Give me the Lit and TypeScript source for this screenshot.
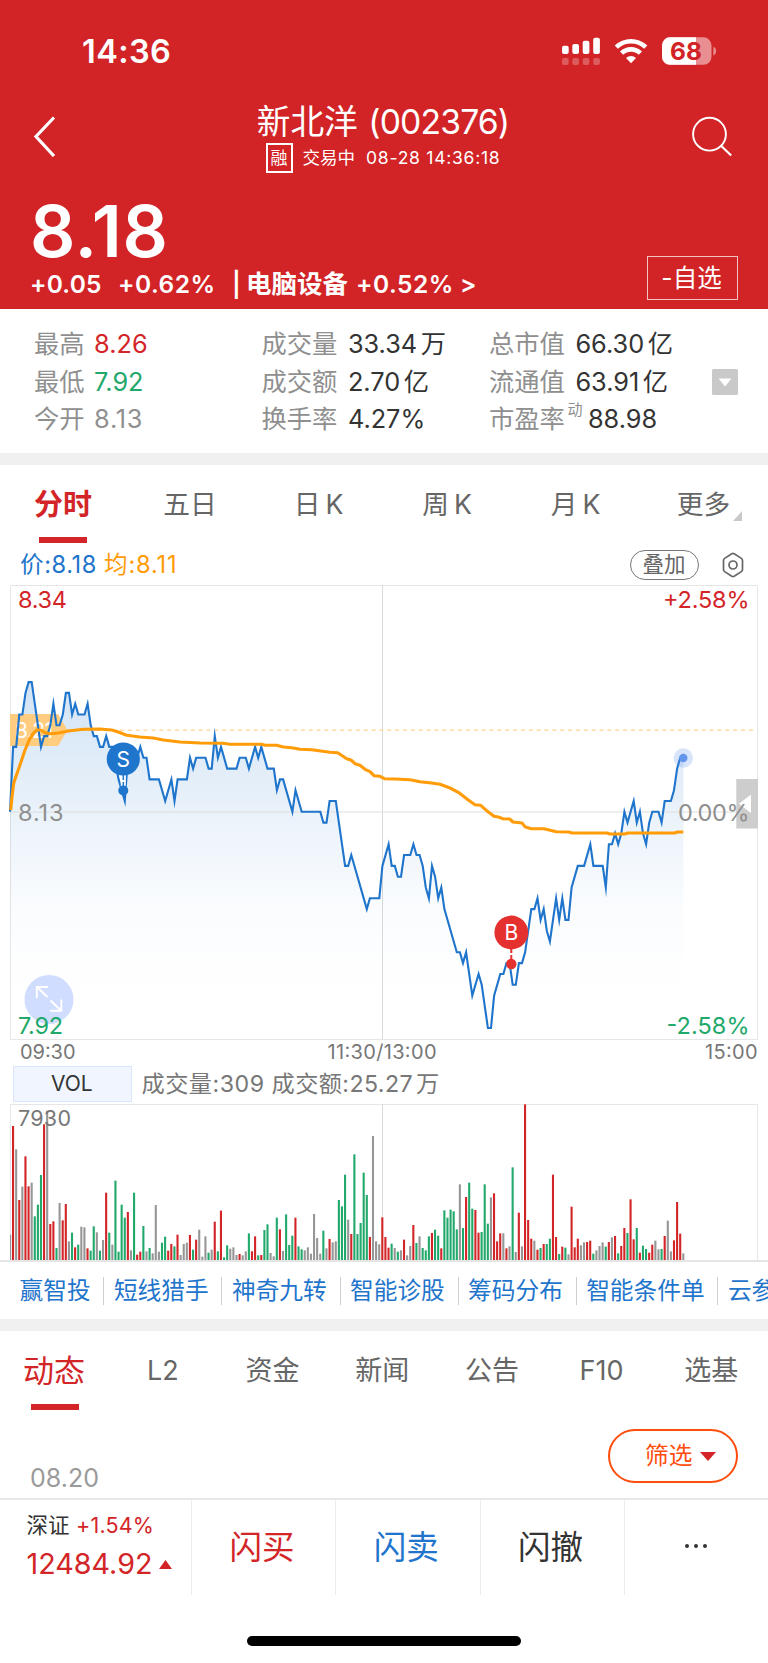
import { LitElement, html, svg, css } from "lit";
import { customElement } from "lit/decorators.js";
import { classMap } from "lit/directives/class-map.js";

// Chart geometry: one slot per trading minute, one level per 0.01 yuan from the previous close.
const X0 = 10;
const STEP = 3.103;
const ZERO_Y = 226.8;
const LEVEL = 10.81;

// [minute, level]
const PRICE: number[][] = [
  [0, 0], [1, 6], [2, 6], [3, 9], [4, 9], [5, 11], [6, 12], [7, 12], [8, 10], [10, 6], [11, 7], [12, 7], [13, 8], [14, 10],
  [15, 8], [16, 8], [17, 9], [18, 11], [19, 11], [20, 9], [21, 10], [22, 9], [24, 9], [25, 10], [26, 8], [27, 7], [28, 7],
  [29, 6], [30, 6], [31, 7], [32, 6], [33, 6], [34, 4.5], [35, 3], [36, 2], [37, 1], [38, 5], [41, 5], [42, 6], [43, 5], [44, 5],
  [45, 3], [48, 3], [50, 1], [52, 3], [53, 1], [54, 3], [57, 3], [58, 5], [59, 4], [60, 5], [63, 5], [64, 4], [65, 4],
  [66, 7], [67, 5], [68, 6], [70, 4], [73, 4], [74, 5], [76, 5], [77, 4], [79, 6], [80, 5], [81, 6], [83, 4], [85, 4],
  [86, 2], [87, 3], [88, 3], [91, 0], [92, 2], [94, 0], [100, 0], [101, -1], [102, -1], [103, 1], [105, 1], [108, -5],
  [109, -5], [110, -4], [115, -9], [116, -8], [119, -8], [120, -5], [122, -3], [123, -5], [124, -5], [125, -6], [126, -6],
  [127, -4], [129, -4], [130, -3], [131, -4], [132, -4], [133, -5], [134, -7], [135, -8], [136, -5], [137, -6], [138, -8],
  [139, -7], [140, -9], [144, -13], [145, -13], [146, -14], [147, -13], [149, -17], [151, -15], [152, -16], [154, -20],
  [155, -20], [156, -17], [158, -15], [159, -15], [160, -14], [161, -14], [162, -16], [163, -16], [164, -14], [165, -14],
  [166, -13], [168, -9], [169, -9], [170, -8], [171, -10], [172, -9], [173, -11], [174, -12], [176, -8], [177, -10],
  [178, -8], [179, -10], [180, -10], [181, -7], [183, -5], [185, -5], [187, -3], [188, -5], [191, -5], [192, -7], [193, -3],
  [194, -3], [195, -2], [196, -3], [197, -2], [198, 0], [199, -1], [201, 1], [202, -1], [203, 0], [204, -2], [205, -3],
  [206, -1], [207, 0], [209, 0], [210, -1], [211, 1], [213, 1], [214, 2], [215, 4], [216, 5], [217, 5],
];

// Average-price curve, in thirds of a pixel.
const AVERAGE: number[][] = [
  [32, 690], [36, 650], [41, 610], [50, 583], [60, 555], [75, 510], [90, 475], [100, 460], [110, 450], [122, 450], [135, 458], [150, 461],
  [175, 459], [210, 452], [250, 448], [300, 447], [335, 450], [355, 456], [380, 466], [420, 471], [460, 474], [490, 480],
  [540, 486], [600, 489], [670, 490], [690, 493], [785, 493], [795, 496], [830, 496], [850, 501], [875, 503], [900, 508],
  [935, 509], [990, 517], [1013, 518], [1040, 536], [1053, 540], [1065, 551], [1080, 556], [1095, 568], [1110, 575],
  [1122, 587], [1140, 589], [1153, 596], [1185, 597], [1230, 599], [1260, 605], [1295, 609], [1320, 613], [1350, 624],
  [1375, 637], [1405, 660], [1425, 674], [1442, 676], [1460, 692], [1482, 709], [1495, 711], [1509, 716], [1529, 717],
  [1539, 726], [1566, 729], [1576, 741], [1594, 746], [1632, 746], [1669, 755], [1706, 756], [1716, 759], [1822, 759],
  [1829, 762], [1874, 762], [1884, 759], [2024, 759], [2032, 756], [2050, 756],
];

// One bar per minute: r = up, g = down, k = flat, followed by its height in thirds of a pixel.
const VOLUME = (
  "k76 r402 k332 r180 k220 r311 r221 k232 g131 g166 g255 r407 k448 r108 r116 g36 k171 r119 r168 k56 g82 r38 g46 k100 k98 " +
  "r35 g28 g101 k83 g28 k60 r202 g82 k46 g238 g25 g166 g127 r144 k29 g202 r16 r25 g102 k26 g36 k20 k165 k25 g52 g70 r28 " +
  "r48 g41 r76 k15 k48 k52 r75 g31 r61 k91 k10 k71 g22 k31 r115 g26 r148 g8 g44 k34 k38 k15 r18 k14 k26 g80 r26 r71 g14 " +
  "r15 g90 g107 k21 k11 g127 r92 k27 g137 g45 g73 r127 g41 g32 k29 k38 k19 k138 k66 k19 g88 k35 r63 k53 k56 g180 g161 " +
  "g256 k121 r78 g317 g78 g111 g262 g195 r69 k372 k56 k47 r128 r69 r37 g49 k36 g25 k29 r61 k14 k42 r105 g51 k71 g36 g29 " +
  "g71 r81 g91 g73 r35 g149 g127 g151 g146 g92 k227 g96 r189 g232 g154 r150 r82 g84 g227 g109 k188 r200 r56 r80 k80 r35 " +
  "k41 g278 k24 r142 k41 r467 r120 r64 k58 r31 g36 r48 g48 g64 r256 r69 g18 r40 g37 k17 r160 r38 r64 k44 k53 r54 r58 g19 " +
  "k29 k42 k53 g40 r54 k68 r72 g20 r42 r96 g81 r182 r62 g96 r22 g43 g33 r22 r46 k58 k32 g33 r72 k118 k26 r59 r174 r79 k20"
).split(" ");

const FILL: Record<string, string> = { r: "#d32528", g: "#21a86b", k: "#969696" };

const baseText = css`
  :host {
    display: block;
    font-family: Inter, "Noto Sans CJK SC", sans-serif;
    box-sizing: border-box;
  }
  *,
  *::before {
    box-sizing: border-box;
  }
`;

@customElement("quote-header")
class QuoteHeader extends LitElement {
  static styles = [
    baseText,
    css`
      :host {
        height: 309px;
        background: #d22326;
        color: #fff;
        white-space: nowrap;
      }
      .status {
        height: 98px;
        padding: 4px 50px 0 82px;
        display: flex;
        align-items: center;
        justify-content: space-between;
      }
      .clock {
        font-size: 32.5px;
        font-weight: 600;
        letter-spacing: 0.4px;
        padding-top: 1px;
      }
      .nav {
        height: 94px;
        padding: 0 34px 0 32px;
        display: grid;
        grid-template-columns: 40px 1fr 42px;
      }
      .nav > svg {
        margin-top: 17px;
      }
      .heading {
        display: flex;
        flex-direction: column;
        align-items: center;
        padding-left: 2px;
      }
      .name {
        font-size: 33.700px;
        line-height: 42px;
        margin-top: 3px;
      }
      .code {
        letter-spacing: -0.850px;
        margin-left: 1px;
      }
      .sub {
        display: flex;
        align-items: center;
        font-size: 17.5px;
        line-height: 30px;
      }
      .margin {
        width: 27px;
        height: 30px;
        border: 2px solid #fff;
        font-size: 17px;
        line-height: 26px;
        text-align: center;
        margin-right: 10px;
      }
      .time {
        margin-left: 11px;
        letter-spacing: 0.750px;
      }
      .quote {
        padding: 1px 30px 0;
        display: flex;
        justify-content: space-between;
      }
      .price {
        font-size: 71px;
        line-height: 77px;
        font-weight: 600;
        letter-spacing: 0.700px;
      }
      .change {
        display: flex;
        font-size: 24.5px;
        line-height: 28px;
        font-weight: 600;
      }
      .watch {
        width: 91px;
        height: 44px;
        margin-top: 63px;
        border: 1.5px solid #f3c3c3;
        font-size: 24.500px;
        line-height: 43px;
        text-align: center;
        padding-right: 2px;
      }
      .a {
        width: 88px;
        letter-spacing: 0.200px;
      }
      .b {
        width: 114px;
        letter-spacing: 0.500px;
      }
      .c {
        width: 14px;
      }
      .d {
        width: 110px;
        font-size: 25.5px;
      }
      .e {
        width: 104px;
        letter-spacing: 0.500px;
      }
    `,
  ];

  render() {
    return html`
      <div class="status">
        <span class="clock">14:36</span>
        <svg width="156" height="30" viewBox="0 0 156 30">
          <g fill="#fff">
            <rect x="0" y="9.700" width="6.700" height="8.300" rx="2" />
            <rect x="10.300" y="8" width="6.700" height="10" rx="2" />
            <rect x="20.700" y="4.700" width="6.700" height="13.300" rx="2" />
            <rect x="31.200" y="1.700" width="6.700" height="16.300" rx="2" />
          </g>
          <g fill="#fff" opacity="0.25">
            <rect x="0" y="22" width="6.700" height="7" rx="2" />
            <rect x="10.300" y="22" width="6.700" height="7" rx="2" />
            <rect x="20.700" y="22" width="6.700" height="7" rx="2" />
            <rect x="31.200" y="22" width="6.700" height="7" rx="2" />
          </g>
          <g fill="none" stroke="#fff" stroke-width="4.6" transform="translate(-1 1)">
            <path d="M55.3 10.2a21 21 0 0 1 29.4 0" />
            <path d="M60.6 16.2a13.4 13.4 0 0 1 18.8 0" />
          </g>
          <path d="M69 27.300l-5-5.200a7.200 7.200 0 0 1 10 0z" fill="#fff" />
          <rect x="100" y="1.300" width="49.500" height="27.500" rx="8" fill="#e98f91" />
          <path d="M108 1.300h26v27.500h-26a8 8 0 0 1-8-8v-11.500a8 8 0 0 1 8-8z" fill="#fff" />
          <path d="M151.400 10.500q2.800 1.500 2.800 4.500t-2.800 4.500z" fill="#e98f91" />
          <text x="124" y="24" font-size="24.500" font-weight="700" fill="#d22326" text-anchor="middle">68</text>
        </svg>
      </div>
      <div class="nav">
        <svg width="24" height="42" viewBox="0 0 24 42">
          <path d="M22 2.500L4 21.500L22 41" fill="none" stroke="#fff" stroke-width="3.200" />
        </svg>
        <div class="heading">
          <div class="name">新北洋 <span class="code">(002376)</span></div>
          <div class="sub">
            <span class="margin">融</span><span>交易中</span><span class="time">08-28 14:36:18</span>
          </div>
        </div>
        <svg width="42" height="42" viewBox="0 0 42 42">
          <circle cx="17.500" cy="19.200" r="16.400" fill="none" stroke="#fff" stroke-width="1.900" />
          <path d="M29.300 31L39.200 40.500" stroke="#fff" stroke-width="2.200" />
        </svg>
      </div>
      <div class="quote">
        <div>
          <div class="price">8.18</div>
          <div class="change">
            <span class="a">+0.05</span><span class="b">+0.62%</span><span class="c">|</span
            ><span class="d">电脑设备</span><span class="e">+0.52%</span><span>&gt;</span>
          </div>
        </div>
        <div class="watch">-自选</div>
      </div>
    `;
  }
}

@customElement("quote-stats")
class QuoteStats extends LitElement {
  static styles = [
    baseText,
    css`
      :host {
        height: 144px;
        padding: 16px 30px 0 34px;
        background: #fff;
        display: grid;
        grid-template-columns: 227.500px 227.500px 1fr 26px;
        align-items: start;
        font-size: 25.3px;
        white-space: nowrap;
        color: #333;
      }
      .row {
        height: 37.5px;
        line-height: 37.5px;
        display: flex;
      }
      .label {
        color: #8f8f8f;
        margin-right: 9.500px;
      }
      .wide {
        margin-right: 10.500px;
      }
      .tight {
        margin-right: 1px;
      }
      .sup {
        font-size: 15px;
        line-height: 20px;
        color: #8f8f8f;
        margin: 0 5.500px 0 1.500px;
      }
      .value {
        letter-spacing: 0;
      }
      .unit {
        margin-left: 3.500px;
      }
      .up {
        color: #d32528;
      }
      .down {
        color: #21a86b;
      }
      .flat {
        color: #8f8f8f;
        letter-spacing: 0.700px;
      }
      .more {
        margin-top: 43.500px;
        width: 26px;
        height: 26px;
      }
    `,
  ];

  private cell(label: string, value: string, unit = "", tone = "") {
    return html`<div class="row">
      <span class=${classMap({ label: true, wide: label.length > 2 })}>${label}</span
      ><span class=${classMap({ value: true, [tone || "plain"]: true })}>${value}</span>
      ${unit ? html`<span class="unit">${unit}</span>` : ""}
    </div>`;
  }

  render() {
    return html`
      <div>
        ${this.cell("最高", "8.26", "", "up")} ${this.cell("最低", "7.92", "", "down")}
        ${this.cell("今开", "8.13", "", "flat")}
      </div>
      <div>
        ${this.cell("成交量", "33.34", "万")} ${this.cell("成交额", "2.70", "亿")} ${this.cell("换手率", "4.27%")}
      </div>
      <div>
        ${this.cell("总市值", "66.30", "亿")} ${this.cell("流通值", "63.91", "亿")}
        <div class="row">
          <span class="label tight">市盈率</span><span class="sup">动</span><span class="value">88.98</span>
        </div>
      </div>
      <svg class="more" viewBox="0 0 26 26">
        <rect width="26" height="26" rx="1.500" fill="#c9c9c9" />
        <path d="M6.500 9.500h13l-6.500 8z" fill="#fff" />
      </svg>
    `;
  }
}

@customElement("price-chart")
class PriceChart extends LitElement {
  static styles = [
    baseText,
    css`
      svg {
        display: block;
      }
      .lab {
        font-size: 23.5px;
      }
      .axis {
        font-size: 20px;
        fill: #777;
      }
    `,
  ];

  render() {
    const pts = PRICE.map(([m, l]) => `${(X0 + m * STEP).toFixed(1)},${(ZERO_Y - l * LEVEL).toFixed(1)}`).join(" ");
    const avg = AVERAGE.map(([x, y]) => `${(x / 3).toFixed(1)},${(y / 3 - 5).toFixed(1)}`).join(" ");
    const endX = (X0 + 217 * STEP).toFixed(1);
    return html`<svg width="768" height="481" viewBox="0 0 768 481">
      <defs>
        <linearGradient id="area" gradientUnits="userSpaceOnUse" x1="0" y1="97" x2="0" y2="454">
          <stop offset="0" stop-color="#1f75cc" stop-opacity="0.2" />
          <stop offset="0.38" stop-color="#1f75cc" stop-opacity="0.09" />
          <stop offset="0.62" stop-color="#1f75cc" stop-opacity="0.025" />
          <stop offset="0.8" stop-color="#1f75cc" stop-opacity="0.005" />
          <stop offset="1" stop-color="#1f75cc" stop-opacity="0" />
        </linearGradient>
      </defs>
      <path d="M10.5 .5H757.500V454.500H10.500z" fill="none" stroke="#e6e6e6" />
      <path d="M382.500 0V454" stroke="#dadada" />
      <path d="M10 145.200H755" stroke="#ffdba3" stroke-width="1.500" stroke-dasharray="4 3.860" />
      <polygon points="${X0},454 ${pts} ${endX},454" fill="url(#area)" />
      <path d="M10 129H58L67.500 145L58 161H10z" fill="#ffcc80" />
      <text x="15" y="152.500" font-size="21" fill="#fff" textLength="38">8.21</text>
      <path d="M10 227H757" stroke="#dedede" stroke-width="1.200" />
      <polyline points=${pts} fill="none" stroke="#1f75cc" stroke-width="2.100" stroke-miterlimit="10" />
      <polyline points=${avg} fill="none" stroke="#ff9c08" stroke-width="3.100" stroke-linejoin="round" />
      <circle cx="683.300" cy="173" r="9.700" fill="#6495ed" opacity="0.25" />
      <circle cx="683.300" cy="173" r="4.200" fill="#6495ed" />
      <path d="M123.300 188V204" stroke="#fff" stroke-width="5" />
      <path d="M123.300 188V206" stroke="#1f75cc" stroke-width="1.500" stroke-dasharray="7 2" />
      <circle cx="123.300" cy="205.500" r="5" fill="#1f75cc" />
      <circle cx="123.300" cy="174" r="16.600" fill="#1f75cc" />
      <text x="123.300" y="181.500" font-size="21" fill="#fff" text-anchor="middle">S</text>
      <path d="M511.300 363V374" stroke="#e53030" stroke-width="2" stroke-dasharray="5 2" />
      <circle cx="511.300" cy="379" r="5.200" fill="#e53030" />
      <circle cx="511.300" cy="347.500" r="16.900" fill="#e53030" />
      <text x="511.300" y="355" font-size="21" fill="#fff" text-anchor="middle">B</text>
      <circle cx="49" cy="414.500" r="24.500" fill="#d0ddff" />
      <path
        d="M47.500 412L37 402M36.800 413V402H48M50.500 415.500L61 425.500M61.300 414.500V425.800H50"
        fill="none"
        stroke="#fff"
        stroke-width="1.900"
      />
      <rect x="736.300" y="194" width="21.700" height="49.500" fill="#cdcdcd" />
      <path d="M739 218.800L751 209.500V228z" fill="#fff" />
      <text class="lab" x="18" y="22.800" fill="#d32528" textLength="49">8.34</text>
      <text class="lab" x="18" y="236" fill="#8f8f8f" textLength="45.500">8.13</text>
      <text class="lab" x="18" y="449.200" fill="#21a86b" textLength="45">7.92</text>
      <text class="lab" x="663" y="22.800" fill="#d32528" textLength="86.500">+2.58%</text>
      <text class="lab" x="678" y="236" fill="#8f8f8f" textLength="71.500">0.00%</text>
      <text class="lab" x="666.500" y="449.200" fill="#21a86b" textLength="83">-2.58%</text>
      <text class="axis" x="20" y="473.500" textLength="55.500">09:30</text>
      <text class="axis" x="327.500" y="473.500" textLength="109">11:30/13:00</text>
      <text class="axis" x="705" y="473.500" textLength="52.500">15:00</text>
    </svg>`;
  }
}

@customElement("volume-chart")
class VolumeChart extends LitElement {
  static styles = [
    baseText,
    css`
      .head {
        height: 38px;
        padding-left: 13px;
        display: flex;
        white-space: nowrap;
        font-size: 23.2px;
        line-height: 37px;
        color: #777;
      }
      .vol {
        width: 118.500px;
        height: 36px;
        border: 1.500px solid #d9e6fb;
        background: #f0f5ff;
        color: #333;
        font-size: 21px;
        line-height: 34px;
        text-align: center;
        padding-right: 1px;
        margin-right: 10px;
      }
      .space {
        margin-right: 7px;
        letter-spacing: 0.5px;
      }
      .num {
        letter-spacing: 0.4px;
      }
      .wan {
        margin-left: 3px;
      }
      svg {
        display: block;
      }
    `,
  ];

  render() {
    const bars = VOLUME.map((v, i) => {
      const h = Number(v.slice(1)) / 3;
      return svg`<rect x=${(X0 + i * STEP - (i ? 1.1 : 0)).toFixed(2)} y=${(156 - h).toFixed(2)} width=${i ? 2.1 : 1.2} height=${h.toFixed(2)} fill=${FILL[v[0]]} />`;
    });
    return html`
      <div class="head">
        <div class="vol">VOL</div>
        <span class="space">成交量:309</span><span class="num">成交额:25.27</span><span class="wan">万</span>
      </div>
      <svg width="768" height="158" viewBox="0 0 768 158">
        <path d="M10.500 156V.500H757.500V156" fill="none" stroke="#e6e6e6" />
        <path d="M382.500 0V156" stroke="#dadada" />
        <rect y="156" width="768" height="2" fill="#e5e5e5" />
        ${bars}
        <text x="18" y="21.500" font-size="21.500" fill="#777" textLength="53">7930</text>
      </svg>
    `;
  }
}

@customElement("app-root")
class AppRoot extends LitElement {
  static styles = [
    baseText,
    css`
      :host {
        width: 768px;
        height: 1663px;
        background: #fff;
        overflow: hidden;
        display: flex;
        flex-direction: column;
      }
      :host > * {
        flex: none;
      }
      .divider {
        height: 12px;
        background: #f0f0f0;
      }
      .tabs {
        height: 79px;
        display: grid;
        grid-template-columns: 126px 128px 129px 128px 129px 128px;
        padding-top: 17px;
        font-size: 26.700px;
        line-height: 44px;
        color: #666;
        white-space: nowrap;
      }
      .tabs > div {
        display: flex;
        flex-direction: column;
        align-items: center;
      }
      .tabs .on {
        font-size: 29px;
        font-weight: 700;
        line-height: 46px;
        color: #d32528;
      }
      .on::after {
        content: "";
        width: 48px;
        height: 6px;
        background: #d32528;
        margin-top: 9px;
      }
      .k {
        margin-left: 5px;
      }
      .tabs > .more {
        flex-direction: row;
        align-items: flex-start;
        justify-content: center;
        padding-left: 11px;
      }
      .more svg {
        margin: 29px 0 0 3px;
      }
      .legend {
        height: 41px;
        padding: 0 24px 0 20px;
        display: flex;
        align-items: center;
        font-size: 23.600px;
        line-height: 30px;
        white-space: nowrap;
      }
      .now {
        color: #1f75cc;
        width: 84px;
        letter-spacing: 0.600px;
      }
      .mean {
        color: #ff9c08;
        flex: 1;
        letter-spacing: 0.850px;
      }
      .overlay {
        width: 69px;
        height: 30px;
        border: 1.500px solid #777;
        border-radius: 15px;
        font-size: 21.500px;
        line-height: 27px;
        text-align: center;
        color: #666;
        margin: 0 23px 0 0;
        padding-right: 1px;
      }
      .links {
        height: 57px;
        display: flex;
        align-items: center;
        padding-left: 10px;
        font-size: 23.700px;
        line-height: 28px;
        color: #1f75cc;
        white-space: nowrap;
        overflow: hidden;
      }
      .links span {
        padding: 0 12.800px 0 9.500px;
        border-right: 1px solid #cfcfcf;
        flex: none;
      }
      .tabs2 {
        height: 98px;
        display: grid;
        grid-template-columns: 108px repeat(6, 109.700px);
        padding-top: 18px;
        font-size: 27px;
        line-height: 44px;
        color: #666;
        white-space: nowrap;
      }
      .tabs2 > div {
        display: flex;
        flex-direction: column;
        align-items: center;
      }
      .tabs2 .on {
        font-size: 31px;
        color: #d32528;
      }
      .tabs2 .on::after {
        margin: 11px 0 0 2px;
      }
      .feed {
        height: 69px;
        padding: 0 30px;
        display: flex;
        justify-content: space-between;
      }
      .date {
        color: #9a9a9a;
        font-size: 25px;
        line-height: 30px;
        margin-top: 34px;
      }
      .filter {
        width: 130px;
        height: 54px;
        border: 2px solid #ff4d0d;
        border-radius: 27px;
        display: flex;
        align-items: center;
        padding-left: 35px;
        gap: 8px;
        font-size: 23.700px;
        line-height: 30px;
        color: #ff4d0d;
      }
      .bar {
        height: 96px;
        border-top: 2px solid #e8e8e8;
        display: grid;
        grid-template-columns: 192px 144px 144.500px 144px 1fr;
        white-space: nowrap;
        color: #333;
      }
      .bar > div {
        border-right: 1.500px solid #ececec;
        font-size: 32.500px;
        line-height: 95px;
        text-align: center;
        padding-right: 3px;
      }
      .bar > div.index {
        padding: 10px 0 0 26.500px;
        text-align: left;
        font-size: 21.500px;
        line-height: 30px;
      }
      .bar > div.dots {
        border: 0;
        display: flex;
        justify-content: center;
        padding: 43px 1px 0 0;
      }
      .pct {
        letter-spacing: 0.200px;
        margin-left: 6.500px;
      }
      .points {
        display: flex;
        align-items: center;
        gap: 7px;
        font-size: 28.700px;
        line-height: 36px;
        margin-top: 6px;
      }
      .red {
        color: #d32528;
      }
      .bar .blue {
        color: #1f75cc;
      }
      .home {
        width: 274px;
        height: 10px;
        border-radius: 5px;
        background: #000;
        margin: 42px 0 0 247px;
      }
    `,
  ];

  render() {
    return html`
      <quote-header></quote-header>
      <quote-stats></quote-stats>
      <div class="divider"></div>
      <div class="tabs">
        <div class="on">分时</div>
        <div>五日</div>
        <div><span>日<span class="k">K</span></span></div>
        <div><span>周<span class="k">K</span></span></div>
        <div><span>月<span class="k">K</span></span></div>
        <div class="more">
          更多<svg width="9" height="10" viewBox="0 0 9 10"><path d="M9 0V10H0z" fill="#c9c9c9" /></svg>
        </div>
      </div>
      <div class="legend">
        <span class="now">价:8.18</span><span class="mean">均:8.11</span>
        <span class="overlay">叠加</span>
        <svg width="22" height="26" viewBox="0 0 22 26">
          <path
            d="M9.800 1.800q1.200-.700 2.400 0L19.400 6.400q1.100.700 1.100 2v9.200q0 1.300-1.100 2L12.200 24.200q-1.200.700-2.400 0L2.600 19.600q-1.100-.700-1.100-2V8.400q0-1.300 1.100-2z"
            fill="none"
            stroke="#666"
            stroke-width="1.700"
          />
          <circle cx="11" cy="13" r="4" fill="none" stroke="#666" stroke-width="1.700" />
        </svg>
      </div>
      <price-chart></price-chart>
      <volume-chart></volume-chart>
      <div class="links">
        ${["赢智投", "短线猎手", "神奇九转", "智能诊股", "筹码分布", "智能条件单", "云参数"].map(
          (t) => html`<span>${t}</span>`
        )}
      </div>
      <div class="divider"></div>
      <div class="tabs2">
        <div class="on">动态</div>
        ${["L2", "资金", "新闻", "公告", "F10", "选基"].map((t) => html`<div>${t}</div>`)}
      </div>
      <div class="feed">
        <div class="date">08.20</div>
        <div class="filter">
          筛选<svg width="16" height="9" viewBox="0 0 16 9"><path d="M0 0H16L8 9z" fill="#d32528" /></svg>
        </div>
      </div>
      <div class="bar">
        <div class="index">
          <div>深证<span class="pct red">+1.54%</span></div>
          <div class="points red">
            12484.92<svg width="13" height="9" viewBox="0 0 13 9"><path d="M6.500 0L13 9H0z" fill="#d32528" /></svg>
          </div>
        </div>
        <div class="red">闪买</div>
        <div class="blue">闪卖</div>
        <div>闪撤</div>
        <div class="dots">
          <svg width="24" height="6" viewBox="0 0 24 6">
            <g fill="#333"><circle cx="3" cy="3" r="2" /><circle cx="12" cy="3" r="2" /><circle cx="21" cy="3" r="2" /></g>
          </svg>
        </div>
      </div>
      <div class="home"></div>
    `;
  }
}
